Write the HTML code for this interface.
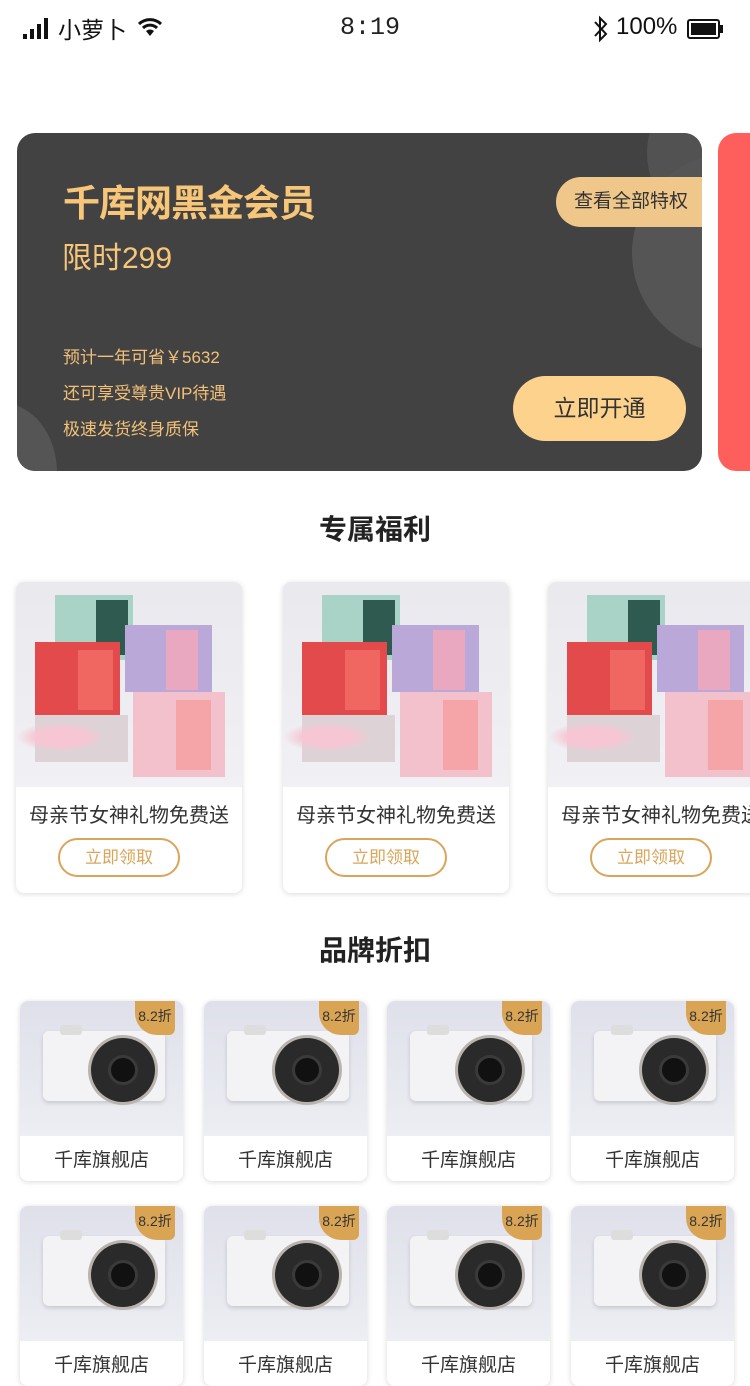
<!DOCTYPE html>
<html><head><meta charset="utf-8"><style>
*{margin:0;padding:0;box-sizing:border-box}
body{width:750px;height:1334px;overflow:hidden;background:#fff;font-family:"Liberation Sans","Noto Sans CJK SC",sans-serif;position:relative}
.abs{position:absolute}
.vip{left:17px;top:133px;width:685px;height:338px;background:#424242;border-radius:18px;overflow:hidden}
.gift{width:226px;height:311px;top:582px;border-radius:8px;background:#fff;box-shadow:0 1px 6px rgba(0,0,0,.15);overflow:hidden}
.gimg{position:absolute;left:0;top:0;width:226px;height:205px;background:linear-gradient(#e9e9ee,#f1f0f4)}
.gimg div{position:absolute}
.gt{position:absolute;top:217px;left:0;width:100%;text-align:center;font-size:20px;color:#333;white-space:nowrap}
.gb{position:absolute;top:256px;left:42px;width:122px;height:39px;border:2px solid #d9a55a;border-radius:20px;color:#d9a55a;font-size:17px;text-align:center;line-height:35px}
.cam{width:163px;height:180px;border-radius:8px;background:#fff;box-shadow:0 1px 6px rgba(0,0,0,.15);overflow:hidden}
.cimg{position:absolute;left:0;top:0;width:163px;height:135px;background:linear-gradient(#dfe0ea,#eceef3)}
.cimg div{position:absolute}
.ct{position:absolute;top:144px;width:100%;text-align:center;font-size:19px;color:#333}
.badge{position:absolute;right:8px;top:0;width:40px;height:34px;background:#d9a555;border-radius:0 0 6px 22px;font-size:14px;color:#333;text-align:center;line-height:30px}
h2{position:absolute;width:750px;text-align:center;font-size:28px;font-weight:bold;color:#222}
</style></head><body>
<div class="abs" style="left:23px;top:18px;width:26px;height:22px">
<div class="abs" style="left:0;top:16px;width:4px;height:5px;background:#111"></div>
<div class="abs" style="left:7px;top:11px;width:4px;height:10px;background:#111"></div>
<div class="abs" style="left:14px;top:6px;width:4px;height:15px;background:#111"></div>
<div class="abs" style="left:21px;top:0;width:4px;height:21px;background:#111"></div>
</div>
<div class="abs" style="left:58px;top:11px;font-size:23px;color:#111">小萝卜</div>
<svg class="abs" style="left:137px;top:16px" width="26" height="22" viewBox="0 0 26 22"><path d="M2 8 A16 16 0 0 1 24 8" stroke="#111" stroke-width="3" fill="none"/><path d="M6 12 A10 10 0 0 1 20 12" stroke="#111" stroke-width="3" fill="none"/><path d="M13 20 L9 15 A6 6 0 0 1 17 15 Z" fill="#111"/></svg>
<div class="abs" style="left:340px;top:13px;font-size:25px;color:#222;font-family:'Liberation Mono',monospace">8:19</div>
<svg class="abs" style="left:591px;top:15px" width="20" height="28" viewBox="0 0 20 28"><path d="M4 7 L15 19 L9 25 V3 L15 9 L4 21" stroke="#111" stroke-width="2" fill="none"/></svg>
<div class="abs" style="left:616px;top:13px;font-size:24px;color:#111">100%</div>
<div class="abs" style="left:687px;top:19px;width:33px;height:20px;border:2px solid #111;border-radius:3px;padding:2px"><div style="width:100%;height:100%;background:#111"></div></div>
<div class="abs" style="left:720px;top:25px;width:3px;height:8px;background:#111"></div>

<div class="abs vip">
<div class="abs" style="left:630px;top:-60px;width:160px;height:160px;border-radius:50%;background:#525252"></div>
<div class="abs" style="left:615px;top:20px;width:200px;height:200px;border-radius:50%;background:#555"></div>
<div class="abs" style="left:-70px;top:270px;width:110px;height:140px;border-radius:50%;background:#555"></div>
<div class="abs" style="left:46px;top:40px;font-size:37px;font-weight:bold;color:#f7c678;letter-spacing:-1px">千库网黑金会员</div>
<div class="abs" style="left:45px;top:100px;font-size:30px;color:#f7c678">限时299</div>
<div class="abs" style="left:46px;top:207px;font-size:17px;color:#f2c078;line-height:36px">预计一年可省￥5632<br>还可享受尊贵VIP待遇<br>极速发货终身质保</div>
<div class="abs" style="left:539px;top:44px;width:180px;height:50px;border-radius:25px;background:#f0c78a;font-size:19px;color:#333;line-height:50px;padding-left:18px">查看全部特权</div>
<div class="abs" style="left:496px;top:243px;width:173px;height:65px;border-radius:33px;background:#fdd28c;font-size:23px;color:#333;line-height:65px;text-align:center">立即开通</div>
</div>
<div class="abs" style="left:718px;top:133px;width:60px;height:338px;border-radius:18px;background:#ff5f5c"></div>

<h2 style="top:508px">专属福利</h2>

<div id="gifts"></div>

<h2 style="top:929px">品牌折扣</h2>

<div id="cams"></div>
<script>
var g='';[16,283,548].forEach(function(x){
g+='<div class="abs gift" style="left:'+x+'px"><div class="gimg">'+
'<div style="left:39px;top:13px;width:78px;height:65px;background:#a9d3c6"></div><div style="left:80px;top:18px;width:32px;height:55px;background:#2e5a50"></div>'+
'<div style="left:109px;top:43px;width:87px;height:67px;background:#b9a8d8"></div><div style="left:150px;top:48px;width:32px;height:60px;background:#e9a8c0"></div>'+
'<div style="left:19px;top:60px;width:85px;height:73px;background:#e24a4b"></div><div style="left:62px;top:68px;width:35px;height:60px;background:#f06660"></div>'+
'<div style="left:19px;top:133px;width:93px;height:47px;background:#ddd3d6"></div>'+
'<div style="left:117px;top:110px;width:92px;height:85px;background:#f2c1cc"></div><div style="left:160px;top:118px;width:35px;height:70px;background:#f5a5a8"></div>'+
'<div style="left:0;top:140px;width:90px;height:30px;background:radial-gradient(#f6c6d4 40%,transparent 70%)"></div>'+
'</div><div class="gt">母亲节女神礼物免费送</div><div class="gb">立即领取</div></div>';});
document.getElementById('gifts').innerHTML=g;
var xs=[20,204,387,571],ys=[1001,1206],h='';
ys.forEach(function(y){xs.forEach(function(x){
h+='<div class="abs cam" style="left:'+x+'px;top:'+y+'px"><div class="cimg">'+
'<div style="left:23px;top:30px;width:122px;height:70px;background:#f3f3f6;border-radius:6px;box-shadow:0 2px 4px rgba(0,0,0,.15)"></div>'+
'<div style="left:40px;top:24px;width:22px;height:10px;background:#ddd;border-radius:3px"></div>'+
'<div style="left:68px;top:34px;width:70px;height:70px;border-radius:50%;background:#b8b3ae"></div>'+
'<div style="left:71px;top:37px;width:64px;height:64px;border-radius:50%;background:#2a2a2a"></div>'+
'<div style="left:88px;top:54px;width:30px;height:30px;border-radius:50%;background:#111;border:3px solid #3a3a3a"></div>'+
'</div><div class="ct">千库旗舰店</div><div class="badge">8.2折</div></div>';
});});
document.getElementById('cams').innerHTML=h;
</script>
</body></html>
